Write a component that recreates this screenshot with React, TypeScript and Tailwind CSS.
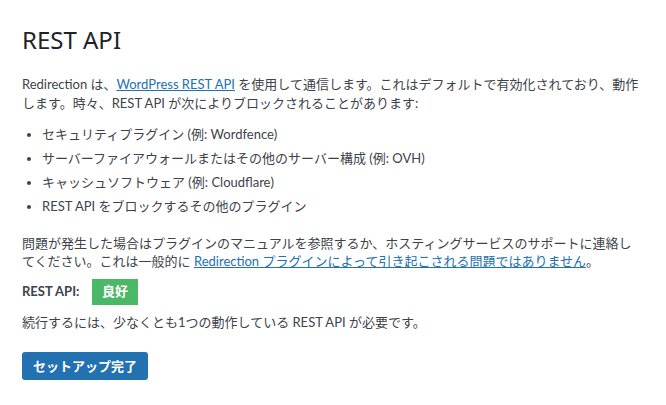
import React from "react";

export default function App() {
  return (
    <div className="w-[666px] h-[405px] bg-white pl-[22px] pr-[28px] pt-[24px] text-[13px] leading-[18.5px] text-[#3c434a] font-['Lato','Noto_Sans_CJK_JP',sans-serif]">
      <h1 className="text-[24px] leading-[32px] text-[#1d2327] font-normal font-['Noto_Sans','Noto_Sans_CJK_JP',sans-serif]">REST API</h1>
      <p className="mt-[19px] -mr-[8px]">
        Redirection は、
        <a className="text-[#2271b1] underline">WordPress REST API</a>
        {" "}を使用して通信します。これはデフォルトで有効化されており、動作します。時々、REST API が次によりブロックされることがあります:
      </p>
      <ul className="mt-[13px] flex flex-col gap-[5.5px] pl-[20px] list-disc">
        <li>セキュリティプラグイン (例: Wordfence)</li>
        <li>サーバーファイアウォールまたはその他のサーバー構成 (例: OVH)</li>
        <li>キャッシュソフトウェア (例: Cloudflare)</li>
        <li>REST API をブロックするその他のプラグイン</li>
      </ul>
      <p className="mt-[18px]">
        問題が発生した場合はプラグインのマニュアルを参照するか、ホスティングサービスのサポートに連絡してください。これは一般的に{" "}
        <a className="text-[#2271b1] underline">Redirection プラグインによって引き起こされる問題ではありません</a>。
      </p>
      <div className="mt-[8px] flex items-center h-[26px]">
        <span className="font-bold text-[#3c434a] w-[70px]">REST API:</span>
        <span className="inline-flex items-center justify-center w-[46px] h-[26px] bg-[#4ab866] text-white font-bold">良好</span>
      </div>
      <p className="mt-[8px]">続行するには、少なくとも1つの動作している REST API が必要です。</p>
      <button className="mt-[21px] h-[28px] px-[11px] rounded-[3px] bg-[#2271b1] text-white text-[13px] font-semibold">
        セットアップ完了
      </button>
    </div>
  );
}
